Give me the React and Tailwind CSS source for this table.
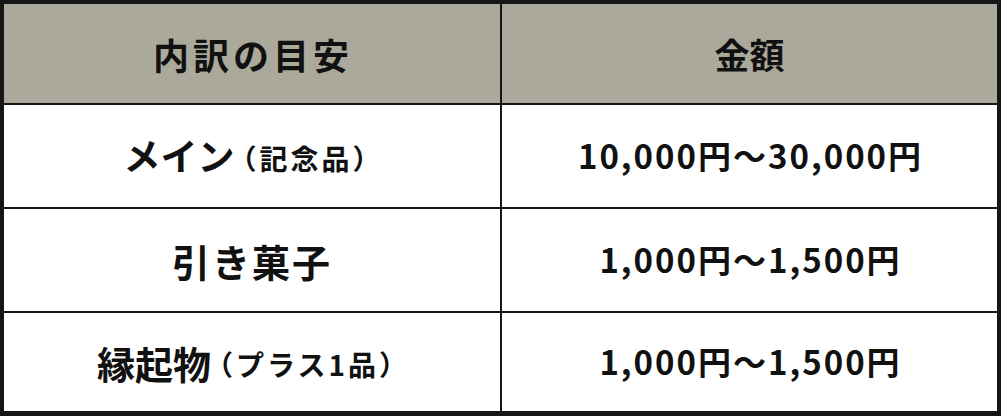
export default function App() {
  const font = { fontFamily: '"Noto Sans CJK JP", "Noto Sans", sans-serif' };
  const rows = [
    { label: 'メイン', lc: 'text-[37px] tracking-[0px]', sub: '（記念品）', amount: '10,000円～30,000円', h: 'h-[102px]' },
    { label: '引き菓子', lc: 'text-[38px] tracking-[2px]', sub: '', amount: '1,000円～1,500円', h: 'h-[102px]' },
    { label: '縁起物', lc: 'text-[38px] tracking-[0px]', sub: '（プラス1品）', amount: '1,000円～1,500円', h: 'h-[98px]' },
  ];
  return (
    <div className="w-[1001px] h-[416px] bg-[#161616] pt-[4px] pl-[4px] pr-[4px] pb-[5px]" style={font}>
      <div className="grid grid-cols-[496px_495px] gap-x-[2px] gap-y-[2px]">
        <div className="h-[99px] bg-[#aaa99c] flex items-center justify-center font-bold text-[36px] tracking-[4px] text-[#111] pl-[2px]">内訳の目安</div>
        <div className="h-[99px] bg-[#aaa99c] flex items-center justify-center font-bold text-[35px] tracking-[0px] text-[#111] pt-[1px]">金額</div>
        {rows.map((r, i) => (
          <>
            <div key={'l' + i} className={`${r.h} bg-white flex items-center justify-center font-bold text-[#111]`}>
              <span className={r.lc}>{r.label}</span>
              {r.sub && <span className="text-[28px] tracking-[3px] ml-[-6px] mr-[-3px] mt-[3px]">{r.sub}</span>}
            </div>
            <div key={'r' + i} className={`${r.h} bg-white flex items-center justify-center font-bold text-[33px] tracking-[2px] text-[#111] pl-[2px]`}>
              {r.amount}
            </div>
          </>
        ))}
      </div>
    </div>
  );
}
